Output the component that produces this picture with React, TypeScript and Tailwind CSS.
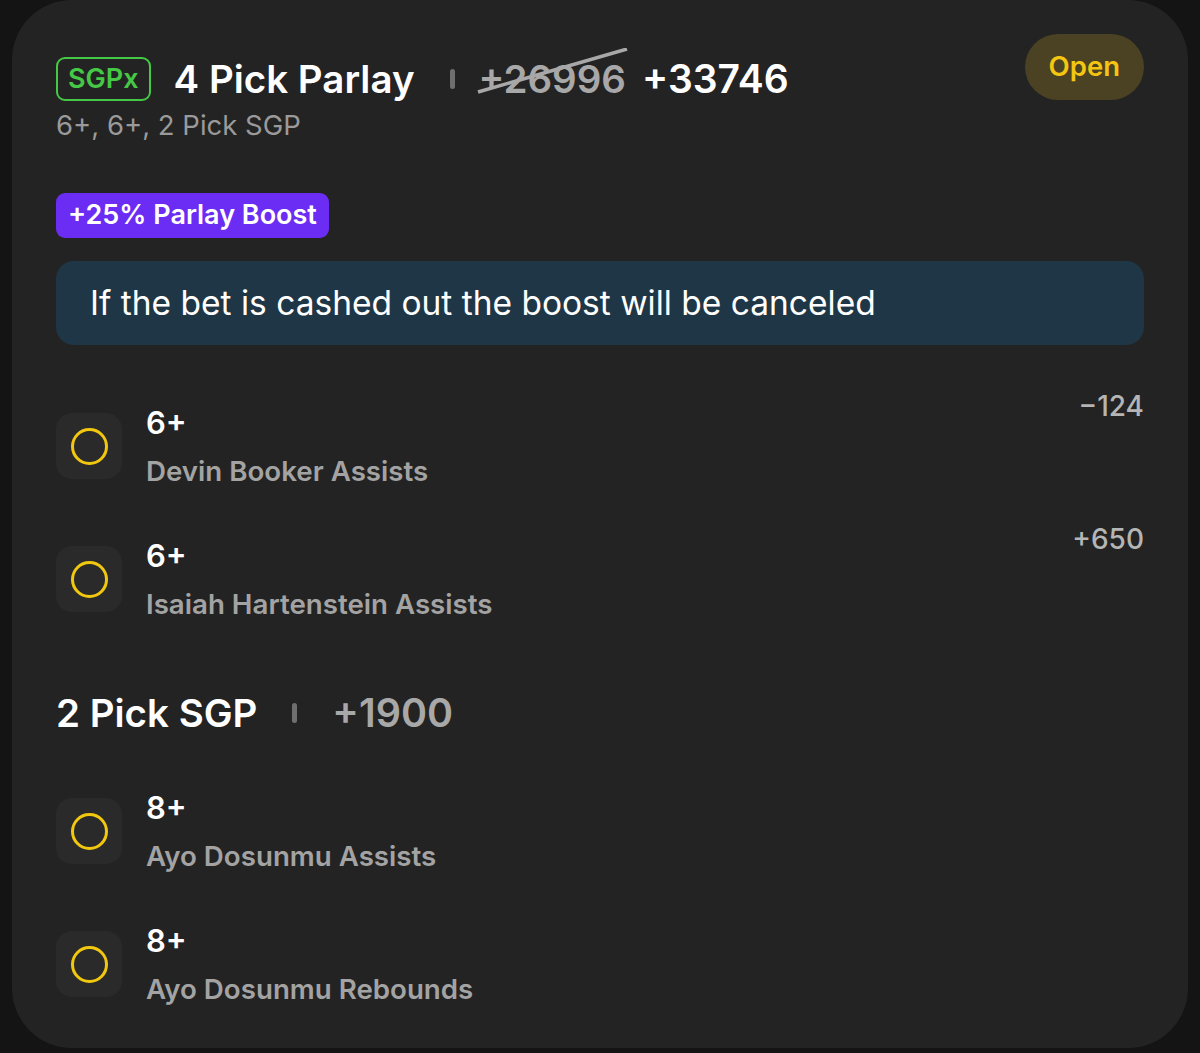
import React from "react";

type Leg = {
  line: string;
  name: string;
  odds?: string;
};

const parlayLegs: Leg[] = [
  { line: "6+", name: "Devin Booker Assists", odds: "\u2212124" },
  { line: "6+", name: "Isaiah Hartenstein Assists", odds: "+650" },
];

const sgpLegs: Leg[] = [
  { line: "8+", name: "Ayo Dosunmu Assists" },
  { line: "8+", name: "Ayo Dosunmu Rebounds" },
];

function LegRow({ leg }: { leg: Leg }) {
  return (
    <div className="flex h-[133px] items-start">
      <div className="mt-[14px] flex h-[66px] w-[66px] shrink-0 items-center justify-center rounded-[16px] bg-[#2a2a2a]">
        <span className="block h-[37px] w-[37px] rounded-full border-[3px] border-[#f2c80f]" />
      </div>
      <div className="ml-[24px] min-w-0 flex-1 pt-[6px]">
        <p className="text-[31px] font-semibold leading-[36px] text-white">{leg.line}</p>
        <p className="mt-[13px] text-[27.7px] font-semibold leading-[34px] text-[#a3a3a3]">
          {leg.name}
        </p>
      </div>
      {leg.odds ? (
        <p className="-mt-[10px] text-[28px] font-medium leading-[34px] text-[#b5b5b5]">
          {leg.odds}
        </p>
      ) : null}
    </div>
  );
}

function Divider() {
  return <span className="block h-[20px] w-[5px] rounded-full bg-[#6f6f6f]" />;
}

export default function App() {
  return (
    <div
      className="min-h-[1053px] bg-[#141414] px-[12px] pb-[5px]"
      style={{ fontFamily: "Inter, 'Noto Sans', sans-serif" }}
    >
      <div className="h-[1048px] rounded-[60px] bg-[#232323] pl-[44px] pr-[44px] pt-[34px]">
        <div className="flex items-start justify-between">
          <div className="pt-[23px]">
            <div className="flex items-center">
              <span className="flex h-[44px] items-center rounded-[9px] border-[2.5px] border-[#45c845] px-[10px] text-[27px] font-semibold text-[#45c845]">
                SGPx
              </span>
              <h1 className="ml-[23px] text-[38.5px] font-semibold leading-[44px] text-white">
                4 Pick Parlay
              </h1>
              <span className="ml-[35px]">
                <Divider />
              </span>
              <span className="relative ml-[24px] text-[38.5px] font-semibold leading-[44px] text-[#a8a8a8]">
                +26996
                <svg
                  className="absolute -left-[2px] top-[-9px] h-[46px] w-[152px]"
                  viewBox="0 0 152 46"
                >
                  <line x1="1" y1="44" x2="150" y2="1" stroke="#a8a8a8" strokeWidth="3.5" />
                </svg>
              </span>
              <span className="ml-[16px] text-[39px] font-semibold leading-[44px] text-white">
                +33746
              </span>
            </div>
            <p className="mt-[8px] text-[27.5px] leading-[32px] text-[#9a9a9a]">
              6+, 6+, 2 Pick SGP
            </p>
          </div>
          <span className="flex h-[66px] items-center rounded-full bg-[#4a4222] px-[24px] text-[27.5px] font-semibold text-[#f4c612]">
            Open
          </span>
        </div>

        <div className="mt-[52px]">
          <span className="inline-flex h-[45px] items-center rounded-[9px] bg-[#6b2cf3] px-[12px] text-[27px] font-semibold text-white">
            +25% Parlay Boost
          </span>
        </div>

        <div className="mt-[23px] flex h-[84px] items-center rounded-[18px] bg-[#1f3646] px-[34px]">
          <p className="text-[33.5px] leading-[40px] text-white">
            If the bet is cashed out the boost will be canceled
          </p>
        </div>

        <div className="mt-[54px]">
          {parlayLegs.map((leg) => (
            <LegRow key={leg.name} leg={leg} />
          ))}
        </div>

        <div className="mt-[25px] flex h-[46px] items-center">
          <h2 className="text-[38.5px] font-semibold leading-[46px] text-white">2 Pick SGP</h2>
          <span className="ml-[35px]">
            <Divider />
          </span>
          <span className="ml-[35px] text-[39.5px] font-semibold leading-[46px] text-[#a8a8a8]">
            +1900
          </span>
        </div>

        <div className="mt-[48px]">
          {sgpLegs.map((leg) => (
            <LegRow key={leg.name} leg={leg} />
          ))}
        </div>
      </div>
    </div>
  );
}
